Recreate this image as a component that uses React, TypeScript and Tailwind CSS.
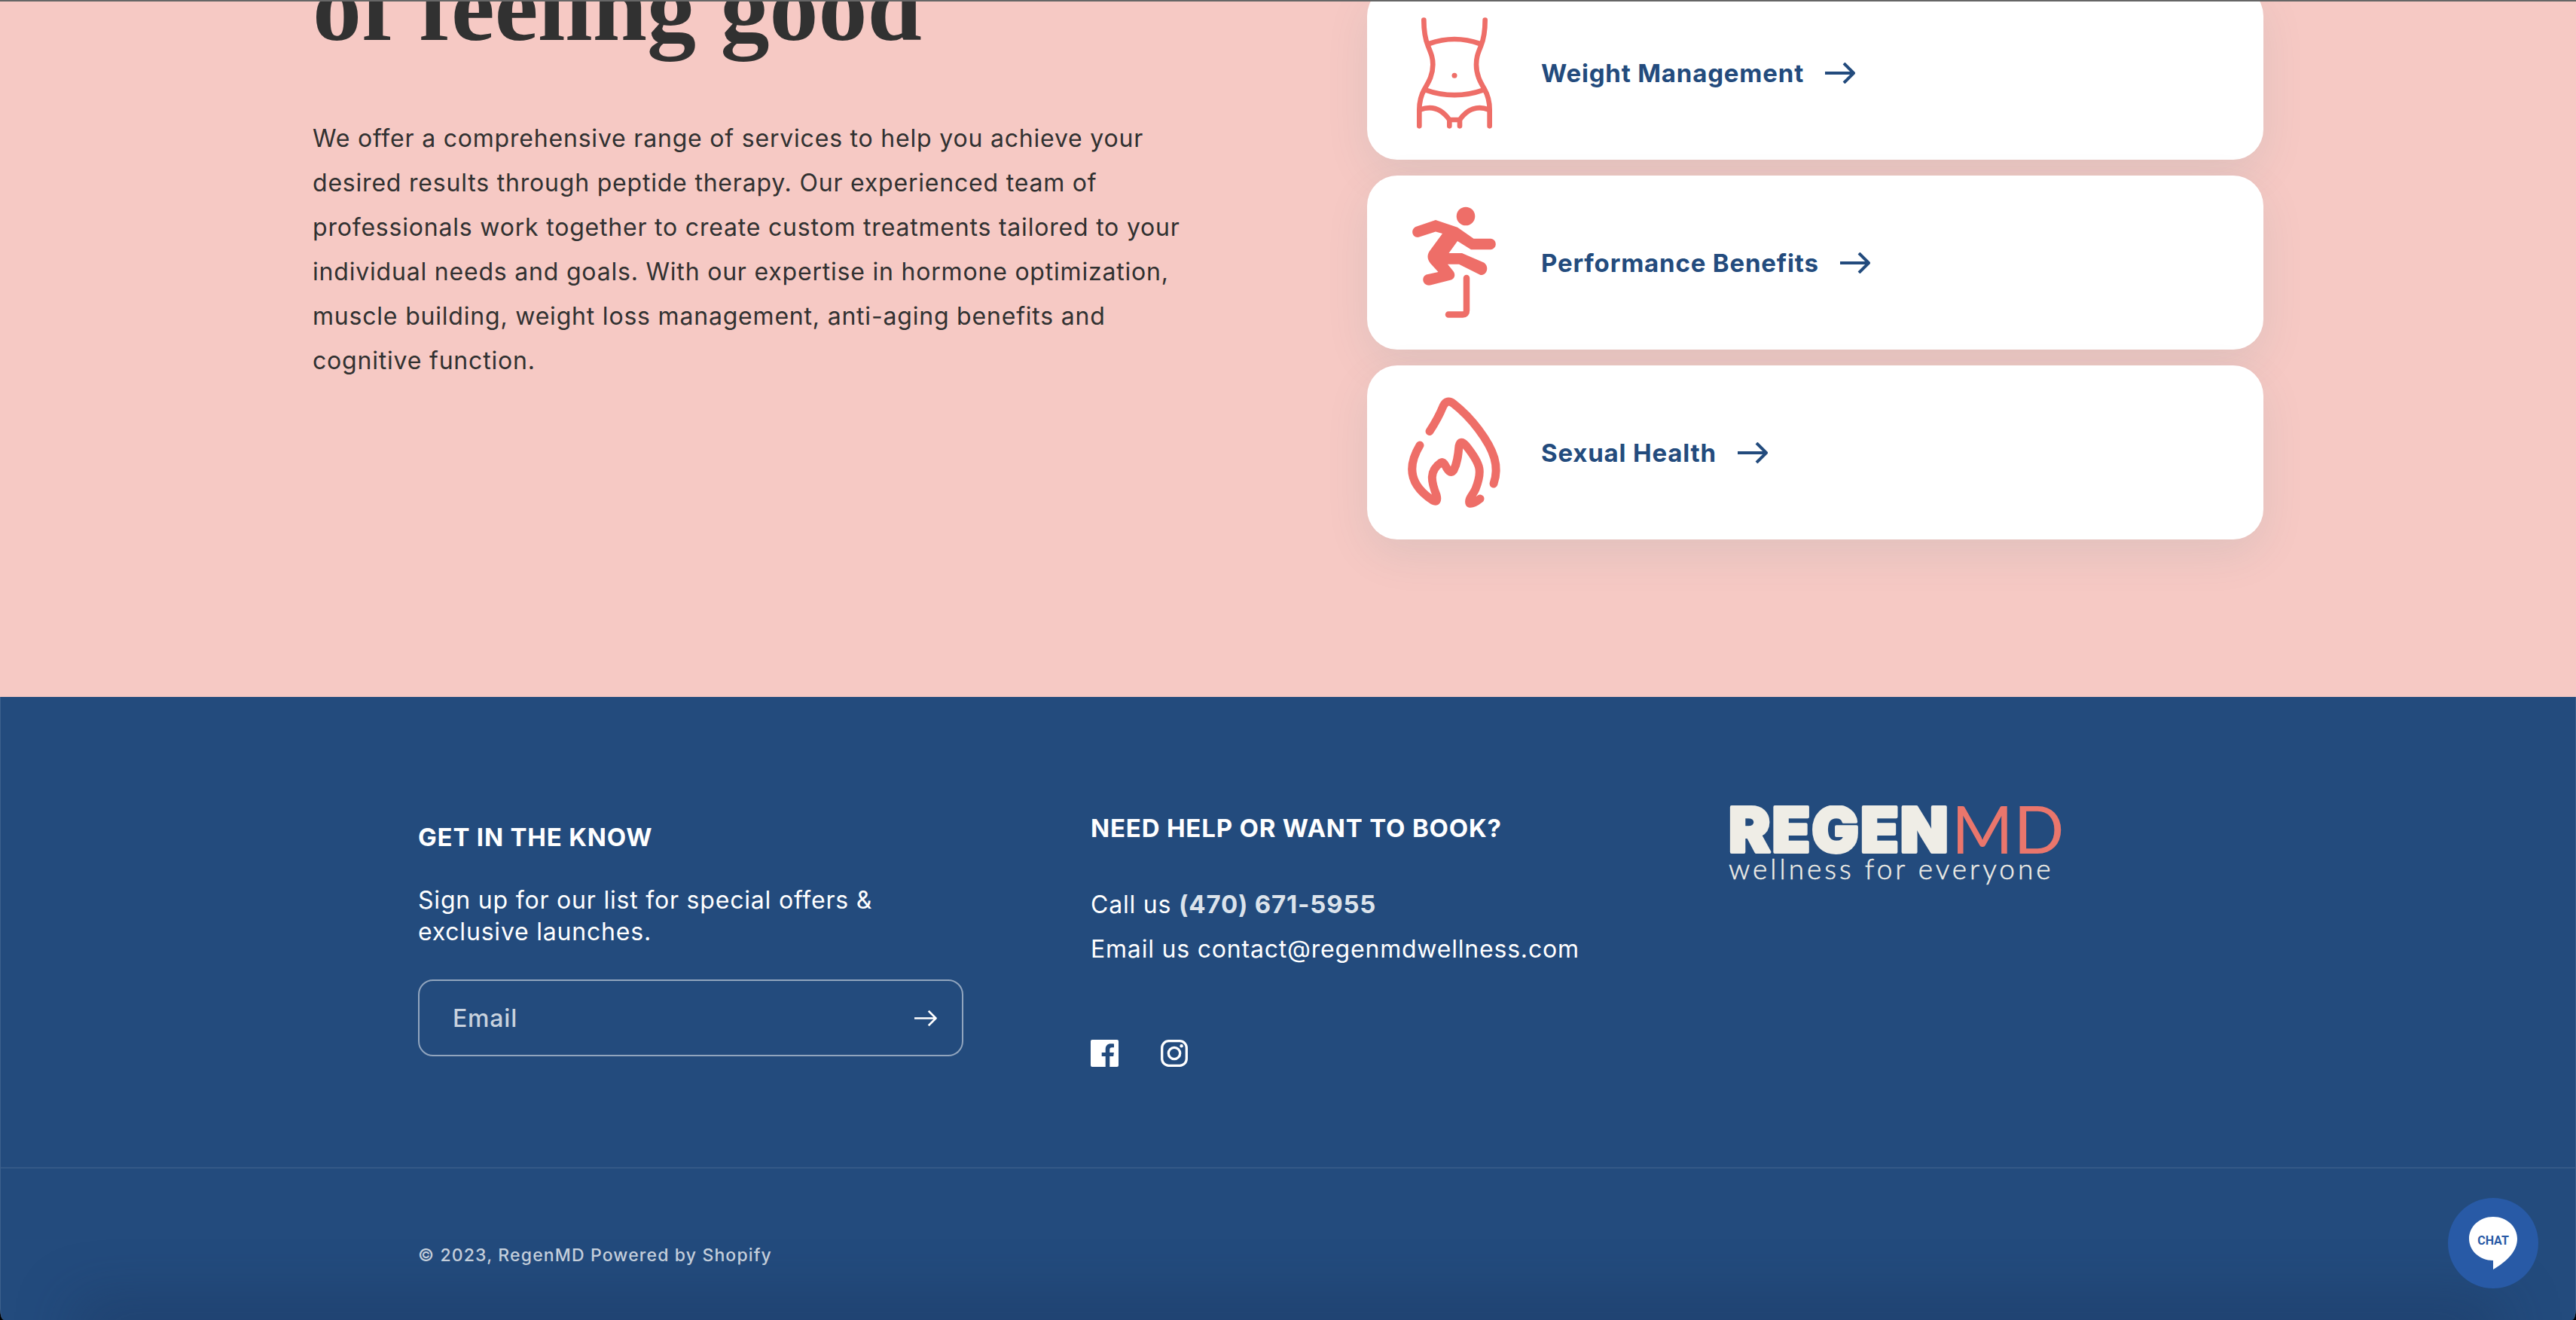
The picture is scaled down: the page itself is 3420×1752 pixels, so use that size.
import type { ReactNode } from "react";

const iconClass = "size-[150px] shrink-0 text-[#ee6e68]";

function WaistIcon() {
  return (
    <svg viewBox="16 34 450 450" className={iconClass} fill="none" stroke="currentColor" strokeWidth="20" strokeLinecap="round" aria-hidden="true">
      <path d="M119 48C119 90 125 125 136 152C150 186 155 200 155 225C155 268 137 296 122 322C106 350 101 375 101 405V470" />
      <path d="M363 48C363 90 357 125 346 152C332 186 328 200 328 225C328 268 345 296 360 322C376 350 381 375 381 405V470" />
      <path d="M140 142Q241 106 342 142M125 326Q241 367 357 326" />
      <path d="M104 405C150 387 190 402 221 445H262C292 402 332 387 378 405M221 445V470M262 445V470" />
      <circle cx="241" cy="269" r="10.5" fill="currentColor" stroke="none" />
    </svg>
  );
}

function HurdleIcon() {
  return (
    <svg viewBox="0 0 150 150" className={iconClass} fill="currentColor" aria-hidden="true">
      <circle cx="90" cy="13" r="12.3" />
      <path d="M50 18L79 27.7L100.5 42.7H123.400a7.300 7.300 0 0 1 0 14.500H97L79 46L67.500 62H85L114 74.500C122 80 118 92 109.500 91L81 76.700H66L73.500 86C77 91 75 96 70.500 97.500L43 104.500C33 106 30 94 37.600 90.500L53.500 87L43 75.500C38 69 39 63 42.500 58.500L59 36L50 33.500L27.500 40.800C19 42 16 31 23.500 27Z" />
      <path d="M91 95V138Q91 143.500 86 143.500H67" fill="none" stroke="currentColor" strokeWidth="8.500" strokeLinecap="round" />
    </svg>
  );
}

function FlameIcon() {
  return (
    <svg viewBox="0 0 150 150" className={iconClass} fill="none" stroke="currentColor" strokeWidth="11" strokeLinecap="round" strokeLinejoin="round" aria-hidden="true">
      <path d="M42 46.500Q53 30 60 13Q65 3 74 10Q92 24 107 44C128 72 135 93 127 116" />
      <path d="M29 65C11 95 17 119 46 138Q54 142 51 131C44 113 41 99 57 88Q60 86 63 92C66 98 70 104 74 98C79 88 80 78 81 66Q83 57 90 65C111 91 112 100 103 123C99 132 93 136 95 142Q99 144 109 136" />
    </svg>
  );
}

function Arrow({ className, strokeWidth }: { className: string; strokeWidth: number }) {
  return (
    <svg viewBox="0 0 40 28" className={className} fill="none" stroke="currentColor" strokeWidth={strokeWidth} strokeLinejoin="round" aria-hidden="true">
      <path d="M0 14H38M25 1L38 14L25 27" />
    </svg>
  );
}

function ServiceCard({ icon, label }: { icon: ReactNode; label: string }) {
  return (
    <a href="#" className="flex h-[231px] items-center gap-10 rounded-[40px] bg-white pl-[41px] text-[33px] leading-10 font-bold tracking-wide text-[#234b7d] shadow-[0_20px_60px_rgba(10,110,125,0.09)]">
      {icon}
      <span className="flex items-center gap-7">
        {label}
        <Arrow className="h-7 w-10" strokeWidth={4} />
      </span>
    </a>
  );
}

function Logo() {
  return (
    <svg viewBox="0 0 446 110" className="h-[110px] w-[446px]" role="img" aria-label="RegenMD wellness for everyone" fontFamily="Lato, sans-serif">
      <text x="0" y="62" fontFamily="Inter, sans-serif" fontSize="83" fontWeight="900" letterSpacing="2" fill="#efede6" stroke="#efede6" strokeWidth="4" strokeLinejoin="round">
        REGEN
      </text>
      <text x="296" y="64" fontSize="88" fontWeight="400" fill="#ea766c">
        MD
      </text>
      <text x="0" y="98" fontSize="37" fontWeight="300" letterSpacing="4" fill="#efede6" stroke="#efede6" strokeWidth="0.5">
        wellness for everyone
      </text>
    </svg>
  );
}

function FacebookIcon() {
  return (
    <svg viewBox="0 0 37 36" className="h-9 w-[37px]" fill="currentColor" aria-hidden="true">
      <path d="M2 0H35a2 2 0 0 1 2 2V34a2 2 0 0 1-2 2H25.300V22H30.200L30.900 16.900H25.300V13.500C25.300 11.500 26 10.300 28.500 10.300H31V5.500C30 5.300 28.500 5.200 27 5.200C22.500 5.200 19.700 7.800 19.700 12.800V16.900H14.700V22H19.700V36H2a2 2 0 0 1-2-2V2a2 2 0 0 1 2-2Z" />
    </svg>
  );
}

function InstagramIcon() {
  return (
    <svg viewBox="0 0 36 36" className="size-9" fill="none" stroke="currentColor" strokeWidth="3.300" aria-hidden="true">
      <rect x="1.700" y="1.700" width="32.600" height="32.600" rx="9" />
      <circle cx="18" cy="18" r="7.700" />
      <circle cx="27.600" cy="8.300" r="2.200" fill="currentColor" stroke="none" />
    </svg>
  );
}

export default function App() {
  return (
    <div className="relative flex min-h-screen flex-col overflow-hidden bg-black font-[Inter,sans-serif]">
      <section className="overflow-hidden border-t-2 border-[#666] bg-[#f6c9c4] px-10 pb-[209px]">
        <div className="mx-auto grid max-w-[2590px] grid-cols-2 items-start gap-[210px]">
          <div className="-mt-[58px] text-[#313131]">
            <h2 className="font-['Liberation_Serif',serif] text-[130px] leading-none font-bold">of feeling good</h2>
            <p className="mt-20 text-[32px] leading-[59px] tracking-wide">
              We offer a comprehensive range of services to help you achieve your desired results through peptide therapy. Our experienced team of
              professionals work together to create custom treatments tailored to your individual needs and goals. With our expertise in hormone
              optimization, muscle building, weight loss management, anti-aging benefits and cognitive function.
            </p>
          </div>
          <div className="-mt-[21px] flex flex-col gap-[21px]">
            <ServiceCard icon={<WaistIcon />} label="Weight Management" />
            <ServiceCard icon={<HurdleIcon />} label="Performance Benefits" />
            <ServiceCard icon={<FlameIcon />} label="Sexual Health" />
          </div>
        </div>
      </section>

      <footer className="relative flex grow flex-col overflow-hidden border-x border-[#3d608c] bg-[#234b7d] text-[32px] tracking-wide text-white [border-bottom-left-radius:5px_15px] [border-bottom-right-radius:5px_15px]">
        <div className="border-b-2 border-[#345987] px-10 pt-36 pb-[133px]">
          <div className="mx-auto grid max-w-[2310px] grid-cols-[893fr_847fr_570fr]">
            <div className="max-w-[724px] pt-[22px]">
              <h2 className="text-[33px] leading-10 font-bold">GET IN THE KNOW</h2>
              <p className="mt-[43px] max-w-[660px] leading-[42px]">Sign up for our list for special offers &amp; exclusive launches.</p>
              <form className="mt-[42px] flex h-[102px] items-center rounded-[20px] border-2 border-[#91a5be]" onSubmit={(e) => e.preventDefault()}>
                <label htmlFor="email" className="sr-only">
                  Email
                </label>
                <input id="email" type="email" placeholder="Email" className="h-full min-w-0 grow bg-transparent pl-11 font-medium tracking-wide outline-none placeholder:text-[#c8d2de]" />
                <button type="submit" aria-label="Subscribe" className="px-[33px] py-4">
                  <Arrow className="h-[21px] w-[30px]" strokeWidth={3.5} />
                </button>
              </form>
            </div>
            <div className="pt-[10px]">
              <h2 className="text-[33px] leading-10 font-bold">NEED HELP OR WANT TO BOOK?</h2>
              <p className="mt-[52px] leading-[59px]">
                Call us{" "}
                <a href="tel:4706715955" className="text-[33px] font-bold text-[#dce3eb]">
                  (470) 671-5955
                </a>
                <br />
                Email us <a href="mailto:contact@regenmdwellness.com">contact@regenmdwellness.com</a>
              </p>
              <div className="mt-[91px] flex gap-14">
                <a href="#" aria-label="Facebook">
                  <FacebookIcon />
                </a>
                <a href="#" aria-label="Instagram">
                  <InstagramIcon />
                </a>
              </div>
            </div>
            <div>
              <Logo />
            </div>
          </div>
        </div>
        <div className="px-10 pt-[97px]">
          <p className="mx-auto max-w-[2310px] text-[23px] leading-9 font-medium tracking-wider text-[#c8d2de]">© 2023, RegenMD Powered by Shopify</p>
        </div>
        <div className="pointer-events-none absolute inset-x-[120px] -bottom-5 h-5 shadow-[0_0_80px_20px_rgba(26,46,80,0.4)]" />
      </footer>

      <button type="button" aria-label="Open chat" className="fixed right-[50px] bottom-[42px] flex size-[120px] items-center justify-center rounded-full bg-[#285aa6]">
        <svg viewBox="0 0 64 70" className="h-[70px] w-16" aria-hidden="true">
          <path d="M32 0C50 0 64 13 64 29C64 45 52 58 32 70V58C14 58 0 45 0 29C0 13 14 0 32 0Z" fill="#fff" />
          <text x="32" y="37" textAnchor="middle" fontFamily="Roboto, sans-serif" fontSize="16" fontWeight="700" fill="#285aa6">
            CHAT
          </text>
        </svg>
      </button>
    </div>
  );
}
